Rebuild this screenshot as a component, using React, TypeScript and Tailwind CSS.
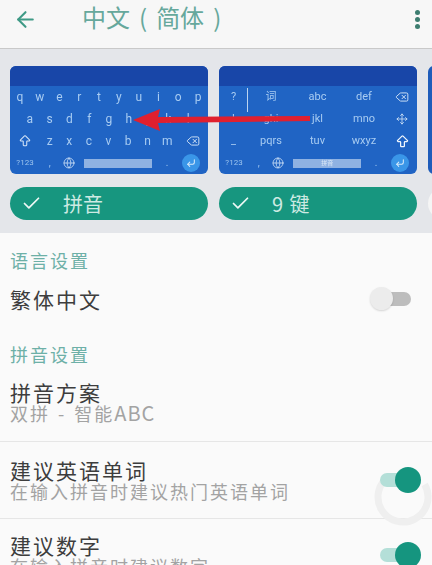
import { ArrowLeft, Check, Delete, Globe, CornerDownLeft, ArrowBigUp, Move } from 'lucide-react';

const font = { cjk: 'font-["Noto_Sans_CJK_SC","Noto_Sans",sans-serif]' };

const letterRows = ['qwertyuiop', 'asdfghjkl'];
const thirdRow = ['z', 'x', 'c', 'v', 'b', 'n', 'm'];

function BottomRow({ spaceLabel }: { spaceLabel?: string }) {
  return (
    <div className="flex h-[22px] items-center text-[#9cc4ee]">
      <div className="w-[30px] text-center text-[8px]">?123</div>
      <div className="w-[19.6px] text-center text-[10px] leading-none">,</div>
      <div className="flex w-[19.6px] justify-center">
        <Globe size={12} strokeWidth={1.6} className="text-[#cfe2f7]" />
      </div>
      <div className="ml-[5px] flex h-[9px] w-[68px] items-center justify-center bg-[#8fb2e2] text-[6px] leading-none text-[#dce9f8]">
        {spaceLabel}
      </div>
      <div className="w-[30px] text-center text-[10px] leading-none">.</div>
      <div className="flex h-[18px] w-[18px] items-center justify-center rounded-full bg-[#3a96e8]">
        <CornerDownLeft size={10} strokeWidth={2.5} className="text-[#d8ebfb]" />
      </div>
    </div>
  );
}

function QwertyKeyboard() {
  return (
    <div className="h-[108px] w-[198px] shrink-0 overflow-hidden rounded-[6px] bg-[#2064c4] text-[12px] font-['Roboto',sans-serif] text-[#a8ccf2] blur-[0.4px]">
      <div className="h-[20px] bg-[#1846a8]" />
      <div className="grid h-[22px] grid-cols-10 place-items-center">
        {letterRows[0].split('').map((k) => (
          <span key={k}>{k}</span>
        ))}
      </div>
      <div className="grid h-[22px] grid-cols-9 place-items-center px-[10px]">
        {letterRows[1].split('').map((k) => (
          <span key={k}>{k}</span>
        ))}
      </div>
      <div className="flex h-[22px] items-center">
        <div className="flex w-[30px] justify-center">
          <ArrowBigUp size={14} strokeWidth={1.8} className="text-[#d6e6f8]" />
        </div>
        {thirdRow.map((k) => (
          <div key={k} className="w-[19.6px] text-center">
            {k}
          </div>
        ))}
        <div className="flex w-[31px] justify-center">
          <Delete size={14} strokeWidth={1.6} className="text-[#d6e6f8]" />
        </div>
      </div>
      <BottomRow />
    </div>
  );
}

function NineKeyKeyboard() {
  const rows = [
    ['?', '词', 'abc', 'def'],
    ['!', 'ghi', 'jkl', 'mno'],
    ['_', 'pqrs', 'tuv', 'wxyz'],
  ];
  return (
    <div className="h-[108px] w-[198px] shrink-0 overflow-hidden rounded-[6px] bg-[#2064c4] text-[11px] font-['Roboto','Noto_Sans_CJK_SC',sans-serif] text-[#a8ccf2] blur-[0.4px]">
      <div className="h-[20px] bg-[#1846a8]" />
      <div className="relative grid h-[66px] grid-cols-[29px_46px_47px_46px_30px] grid-rows-3 place-items-center">
        <div className="absolute left-[28px] top-[2px] h-[24px] w-px bg-[#bcd4f0]" />
        {rows.map((row, i) => (
          <div key={i} className="contents">
            {row.map((k) => (
              <span key={k}>{k}</span>
            ))}
            {i === 0 && <Delete size={14} strokeWidth={1.6} className="text-[#d6e6f8]" />}
            {i === 1 && <Move size={12} strokeWidth={1.6} className="text-[#d6e6f8]" />}
            {i === 2 && <ArrowBigUp size={15} strokeWidth={2} className="text-[#f0f6fd]" />}
          </div>
        ))}
      </div>
      <BottomRow spaceLabel="拼音" />
    </div>
  );
}

function LayoutPill({ label, textClass }: { label: string; textClass: string }) {
  return (
    <div className="flex h-[33px] w-[198px] shrink-0 items-center rounded-full bg-[#17967f] text-[20px] leading-none text-[#cdeae3]">
      <Check size={21} strokeWidth={2} className="ml-[11px] text-[#eef8f5]" />
      <span className={textClass}>{label}</span>
    </div>
  );
}

function Toggle({ on }: { on: boolean }) {
  if (on) {
    return (
      <div className="relative z-10 flex h-[26px] w-[41px] shrink-0 items-center">
        <div className="h-[14px] w-[35px] rounded-full bg-[#b4dfd8]" />
        <div className="absolute right-0 top-0 h-[26px] w-[26px] rounded-full bg-[#15957f]" />
      </div>
    );
  }
  return (
    <div className="relative flex h-[23px] w-[41px] shrink-0 items-center justify-end">
      <div className="h-[14px] w-[30px] rounded-full bg-[#bdbdbd]" />
      <div className="absolute left-0 top-0 h-[23px] w-[23px] rounded-full bg-[#ececec] shadow-[0_1px_2px_rgba(0,0,0,0.15)]" />
    </div>
  );
}

function SectionLabel({ children, className }: { children: string; className: string }) {
  return (
    <div className={`pl-[10px] text-[18px] leading-[24px] tracking-[2px] text-[#6db0a7] ${className}`}>{children}</div>
  );
}

function SettingRow({
  title,
  subtitle,
  on,
  className,
}: {
  title: string;
  subtitle: string;
  on: boolean;
  className: string;
}) {
  return (
    <div className={`flex items-center justify-between pl-[10px] pr-[11px] ${className}`}>
      <div className="whitespace-nowrap">
        <div className="text-[21px] leading-[22px] tracking-[2px] text-[#3d3d3d]">{title}</div>
        <div className="text-[18px] leading-[20px] tracking-[2px] text-[#a3a3a3]">{subtitle}</div>
      </div>
      <Toggle on={on} />
    </div>
  );
}

export default function App() {
  return (
    <div className={`relative h-[565px] w-[432px] overflow-hidden bg-[#fafafa] ${font.cjk}`}>
      <header className="relative z-10 flex h-[49px] items-center border-b border-[#c9c9c9] bg-[#f7f7f7] pb-[10px]">
        <ArrowLeft size={25} strokeWidth={2} className="ml-[13px] text-[#3f9a86]" />
        <h1 className="ml-[44px] -mt-[4px] whitespace-nowrap text-[24px] font-normal leading-none text-[#66a89c]">
          中文<span className="mx-[9px]">(</span>简体<span className="ml-[9px]">)</span>
        </h1>
        <div className="ml-auto mr-[12px] flex flex-col gap-[2px]">
          <span className="h-[5px] w-[5px] rounded-full bg-[#3d7d70]" />
          <span className="h-[5px] w-[5px] rounded-full bg-[#3d7d70]" />
          <span className="h-[5px] w-[5px] rounded-full bg-[#3d7d70]" />
        </div>
      </header>

      <section className="h-[184px] overflow-hidden bg-[#e4e6ea] pl-[10px] pt-[17px]">
        <div className="flex gap-[11px]">
          <QwertyKeyboard />
          <NineKeyKeyboard />
          <div className="h-[108px] w-[198px] shrink-0 rounded-[6px] bg-[#1f5cba]" />
        </div>
        <div className="mt-[13px] flex gap-[11px]">
          <LayoutPill label="拼音" textClass="ml-[21px]" />
          <LayoutPill label="9 键" textClass="ml-[21px] tracking-[1px]" />
          <div className="h-[33px] w-[198px] shrink-0 rounded-full bg-[#f5f5f5]" />
        </div>
      </section>

      <SectionLabel className="pt-[15px]">语言设置</SectionLabel>
      <div className="mt-[15px] flex items-center justify-between pl-[10px] pr-[21px]">
        <div className="text-[21px] leading-[22px] tracking-[2px] text-[#3d3d3d]">繁体中文</div>
        <Toggle on={false} />
      </div>
      <SectionLabel className="mt-[32px]">拼音设置</SectionLabel>
      <div className="mt-[15px] h-[61px] border-b border-[#e6e6e6] pl-[10px]">
        <div className="text-[21px] leading-[22px] tracking-[2px] text-[#3d3d3d]">拼音方案</div>
        <div className="text-[18px] leading-[20px] tracking-[2px] text-[#a3a3a3] [word-spacing:2px]">
          双拼 - 智能<span className="text-[20px] tracking-[1px]">ABC</span>
        </div>
      </div>
      <SettingRow
        title="建议英语单词"
        subtitle="在输入拼音时建议热门英语单词"
        on
        className="h-[77px] border-b border-[#e6e6e6]"
      />
      <SettingRow title="建议数字" subtitle="在输入拼音时建议数字" on className="h-[72px]" />

      {/* touch ring left on the screenshot */}
      <svg className="absolute left-[368px] top-[462px]" width="64" height="64" viewBox="0 0 64 64">
        <circle
          cx="35"
          cy="35"
          r="25"
          fill="none"
          stroke="#efefef"
          strokeWidth="7"
          strokeDasharray="115 42"
          transform="rotate(-30 35 35)"
        />
      </svg>

      {/* red annotation arrow */}
      <svg className="absolute left-[130px] top-[105px]" width="182" height="28" viewBox="0 0 182 28">
        <path d="M3 15 L30 4 L28 12 L180 11 L180 16 L28 18 L30 26 Z" fill="#e0202f" />
      </svg>
    </div>
  );
}
